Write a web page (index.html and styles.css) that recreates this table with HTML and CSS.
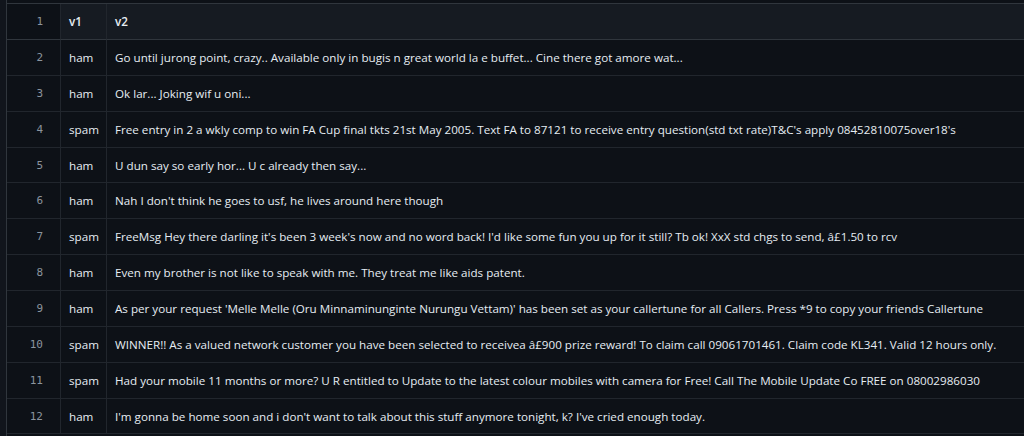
FILE: index.html
```html
<!DOCTYPE html>
<html>
<head>
<meta charset="utf-8">
<link rel="stylesheet" href="styles.css">
</head>
<body>
<div class="frame">
<table class="csv">
<thead>
<tr><td class="num">1</td><th class="c1">v1</th><th class="c2">v2</th></tr>
</thead>
<tbody>
<tr><td class="num">2</td><td class="c1">ham</td><td class="c2">Go until jurong point, crazy.. Available only in bugis n great world la e buffet... Cine there got amore wat...</td></tr>
<tr><td class="num">3</td><td class="c1">ham</td><td class="c2">Ok lar... Joking wif u oni...</td></tr>
<tr><td class="num">4</td><td class="c1">spam</td><td class="c2">Free entry in 2 a wkly comp to win FA Cup final tkts 21st May 2005. Text FA to 87121 to receive entry question(std txt rate)T&amp;C's apply 08452810075over18's</td></tr>
<tr><td class="num">5</td><td class="c1">ham</td><td class="c2">U dun say so early hor... U c already then say...</td></tr>
<tr><td class="num">6</td><td class="c1">ham</td><td class="c2">Nah I don't think he goes to usf, he lives around here though</td></tr>
<tr><td class="num">7</td><td class="c1">spam</td><td class="c2">FreeMsg Hey there darling it's been 3 week's now and no word back! I'd like some fun you up for it still? Tb ok! XxX std chgs to send, â£1.50 to rcv</td></tr>
<tr><td class="num">8</td><td class="c1">ham</td><td class="c2">Even my brother is not like to speak with me. They treat me like aids patent.</td></tr>
<tr><td class="num">9</td><td class="c1">ham</td><td class="c2">As per your request 'Melle Melle (Oru Minnaminunginte Nurungu Vettam)' has been set as your callertune for all Callers. Press *9 to copy your friends Callertune</td></tr>
<tr><td class="num">10</td><td class="c1">spam</td><td class="c2">WINNER!! As a valued network customer you have been selected to receivea â£900 prize reward! To claim call 09061701461. Claim code KL341. Valid 12 hours only.</td></tr>
<tr><td class="num">11</td><td class="c1">spam</td><td class="c2">Had your mobile 11 months or more? U R entitled to Update to the latest colour mobiles with camera for Free! Call The Mobile Update Co FREE on 08002986030</td></tr>
<tr><td class="num">12</td><td class="c1">ham</td><td class="c2">I'm gonna be home soon and i don't want to talk about this stuff anymore tonight, k? I've cried enough today.</td></tr>
</tbody>
</table>
</div>
</body>
</html>
```
FILE: styles.css
```css
html, body {
  margin: 0;
  padding: 0;
  background: #11151c;
  height: 100%;
  overflow: hidden;
}
.frame {
  margin-left: 6px;
  border-left: 1px solid #30363d;
  padding-top: 3px;
  min-height: 100%;
  background: #0d1117;
}
.csv {
  width: 1017px;
  table-layout: fixed;
  border-collapse: separate;
  border-spacing: 0;
  border-top: 1px solid #30363d;
  font-family: "Open Sans", "Noto Sans", sans-serif;
  font-size: 11.65px;
  color: #e6edf3;
}
.csv td, .csv th {
  box-sizing: border-box;
  height: 35.86px;
  padding: 0;
  border-bottom: 1px solid #21262d;
  text-align: left;
  white-space: nowrap;
  overflow: hidden;
  vertical-align: middle;
}
.csv th {
  font-weight: 600;
  background: #161b22;
  border-bottom-color: #30363d;
}
.csv thead td {
  height: 36px;
  border-bottom-color: #30363d;
}
.csv thead th {
  height: 36px;
}
.csv .num {
  width: 53px;
  padding-right: 17px;
  text-align: right;
  color: #8b949e;
  font-family: "DejaVu Sans Mono", monospace;
  font-size: 11px;
  background: #0d1117;
}
.csv .c1 {
  width: 46px;
  padding-left: 8px;
  border-left: 1px solid #21262d;
}
.csv .c2 {
  padding-left: 8px;
  border-left: 1px solid #21262d;
}
```
